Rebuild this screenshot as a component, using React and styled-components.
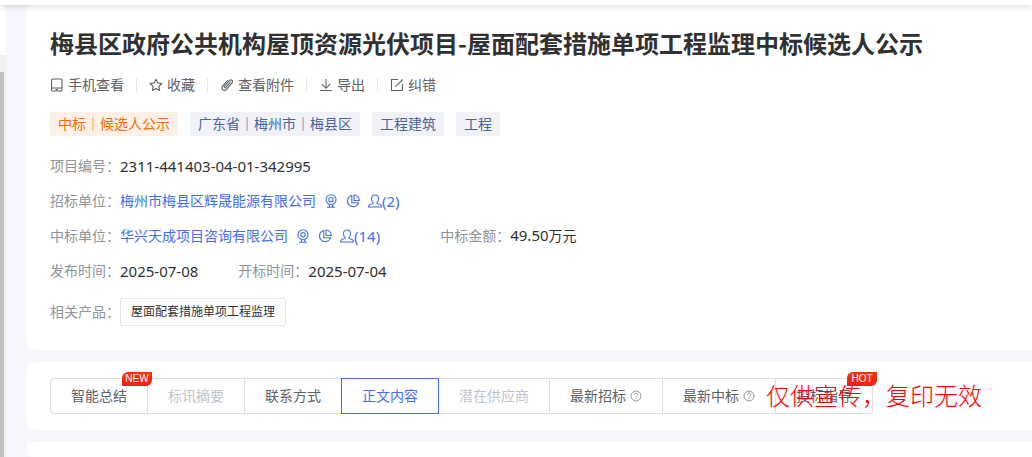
import React from "react";
import styled, { createGlobalStyle } from "styled-components";

const GlobalStyle = createGlobalStyle`
  * { box-sizing: border-box; }
  html, body { margin: 0; }
  body {
    background: #f5f7fc;
    color: #303133;
    font: 14px/20px "Noto Sans", "Noto Sans CJK SC", sans-serif;
    overflow: hidden;
  }
  button { font: inherit; color: inherit; background: none; border: 0; padding: 0; cursor: pointer; }
  a { color: inherit; text-decoration: none; }
`;

const Page = styled.div`
  display: flex;
  flex-direction: column;
  min-height: 100vh;
`;

const TopBar = styled.header`
  flex: none;
  height: 5px;
  background: #fff;
  box-shadow: 0 1px 6px rgba(0, 0, 0, 0.18);
  z-index: 1;
`;

const Body = styled.div`
  flex: 1;
  display: flex;
  gap: 20px;
`;

const SidePanel = styled.aside`
  flex: none;
  width: 6px;
  padding-top: 50px;
  background: #fff;
  border-top-right-radius: 6px;
  display: flex;
  flex-direction: column;
`;

const ScrollTrack = styled.div`
  flex: 1;
  padding: 17px 2px 0 0;
  background: #f1f1f1;
  display: flex;
`;

const ScrollThumb = styled.div`
  flex: 1;
  background: #c1c1c1;
`;

const Main = styled.main`
  flex: 1;
  min-width: 0;
  display: flex;
  flex-direction: column;
  gap: 12px;
`;

const Card = styled.section`
  background: #fff;
  border-radius: 8px 0 0 8px;
  padding: ${(p) => p.$pad || "24px"};
  flex: ${(p) => (p.$fill ? 1 : "none")};
`;

const Title = styled.h1`
  margin: 0;
  font: 700 24px/32px "Noto Sans CJK SC", sans-serif;
`;

const Toolbar = styled.div`
  display: flex;
  margin-top: 16px;
  color: #606266;
`;

const ToolButton = styled.button`
  display: flex;
  align-items: center;
  gap: 4px;
  height: 20px;
`;

const Divider = styled.span`
  width: 1px;
  height: 14px;
  margin: 3px 12px;
  background: #e4e6ee;
`;

const Tags = styled.div`
  display: flex;
  gap: 12px;
  margin: 17px 0 12px;
`;

const Tag = styled.span`
  padding: 0 8px;
  line-height: 24px;
  border-radius: 2px;
  color: ${(p) => (p.$hot ? "#ff6a00" : "#4b639b")};
  background: ${(p) => (p.$hot ? "#fff1e8" : "#f0f2f7")};
`;

const InfoRow = styled.div`
  display: flex;
  align-items: center;
  height: 35px;
  gap: ${(p) => p.$gap || 0}px;
`;

const Field = styled.div`
  display: flex;
  align-items: center;
`;

const Label = styled.span`
  color: #909399;
`;

const Num = styled.span`
  font-size: 15px;
`;

const Company = styled.div`
  display: flex;
  align-items: center;
  gap: 8px;
  color: #446eee;
`;

const IconLink = styled.a`
  display: flex;
  align-items: center;
`;

const Products = styled.div`
  display: flex;
  align-items: center;
  margin-top: 10px;
`;

const Product = styled.a`
  padding: 0 10px;
  border: 1px solid #e4e6ee;
  border-radius: 2px;
  font-size: 12px;
  line-height: 26px;
`;

const TabArea = styled.div`
  position: relative;
`;

const Tabs = styled.nav`
  display: flex;
`;

const Tab = styled.button`
  position: relative;
  display: flex;
  align-items: center;
  gap: 4px;
  height: 36px;
  padding: 0 20px;
  border: 1px solid ${(p) => (p.$active ? "#446eee" : "#dcdfe6")};
  color: ${(p) => (p.$active ? "#446eee" : p.disabled ? "#c0c4cc" : "#606266")};
  z-index: ${(p) => (p.$active ? 1 : 0)};
  & + & { margin-left: -1px; }
  &:first-child { border-radius: 4px 0 0 4px; z-index: 1; }
  &:last-child { border-radius: 0 4px 4px 0; }
`;

const Badge = styled.span`
  position: absolute;
  top: -7px;
  right: -5px;
  width: 30px;
  border-radius: 6px 0 6px 0;
  background: linear-gradient(#ff3000, #ed2020);
  color: #fff;
  font: 10px/14px "Liberation Sans", sans-serif;
  text-align: center;
`;

const Watermark = styled.div`
  position: absolute;
  left: 716px;
  top: -1px;
  z-index: 3;
  color: #f00;
  font: 300 24px/36px "Noto Sans CJK SC", sans-serif;
  white-space: nowrap;
  pointer-events: none;
`;

const Svg = styled.svg`
  flex: none;
  fill: none;
  stroke: currentColor;
  stroke-width: 1.1;
`;

const HelpMark = styled(Svg)`
  color: #909399;
`;

const Icon = ({ children }) => (
  <Svg width="14" height="14" viewBox="0 0 14 14" aria-hidden="true">
    {children}
  </Svg>
);

const PhoneIcon = () => (
  <Icon>
    <rect x="1.500" y="1" width="10.500" height="12" rx="1" />
    <path d="M1.500 10h10.500M5.500 11.600h2.500" />
  </Icon>
);
const StarIcon = () => (
  <Icon>
    <path strokeLinejoin="round" d="M7 1.200l1.800 3.700 4.100.6-3 2.900.7 4.100L7 10.600l-3.600 1.900.7-4.100-3-2.900 4.100-.6z" />
  </Icon>
);
const ClipIcon = () => (
  <Icon>
    <path strokeLinecap="round" d="M10.300 4.200L5.900 9.400c-.9 1-2.300-.1-1.400-1.200l4.700-5.600c1.600-1.900 4.400.3 2.800 2.300l-5.400 6.400c-2.300 2.700-6.200-.4-4-3.200l4.700-5.600" />
  </Icon>
);
const DownloadIcon = () => (
  <Icon>
    <path d="M7 1v9M2.800 6.200L7 10.300l4.200-4.100M1 12.500h12" />
  </Icon>
);
const EditIcon = () => (
  <Icon>
    <path d="M8 1.500H1.500v11h11V6M5.500 8.700l7.200-7.200" />
  </Icon>
);
const CameraIcon = () => (
  <Icon>
    <circle cx="7" cy="5.700" r="5" />
    <circle cx="7" cy="5.700" r="2.200" />
    <path d="M5.400 10.500v2.700M8.600 10.500v2.700M3 13.300h8" />
  </Icon>
);
const PieIcon = () => (
  <Icon>
    <path d="M5.800 1.500a5.700 5.700 0 1 0 6.800 7.200H5.800z" />
    <path d="M8 1a5.200 5.200 0 0 1 5.200 5.500H8z" />
  </Icon>
);
const UserIcon = () => (
  <Icon>
    <path d="M5 8.400C3.700 7.500 3.500 5.900 3.500 4.700 3.500 2.400 5 1 7 1s3.500 1.400 3.500 3.700c0 1.200-.2 2.800-1.500 3.700v1l3 1.100c1 .4 1.500 1.100 1.500 2.500H.5c0-1.400.5-2.100 1.500-2.500l3-1.100z" />
  </Icon>
);
const HelpIcon = () => (
  <HelpMark width="12" height="12" viewBox="0 0 14 14" aria-hidden="true">
    <circle cx="7" cy="7" r="5.800" />
    <path d="M5.200 5.700C5.200 3.200 8.900 3.300 8.900 5.500 8.900 6.800 7 6.900 7 8.500M7 9.600v1.200" />
  </HelpMark>
);

const tools = [
  [PhoneIcon, "手机查看"],
  [StarIcon, "收藏"],
  [ClipIcon, "查看附件"],
  [DownloadIcon, "导出"],
  [EditIcon, "纠错"],
];

const tabs = [
  { text: "智能总结", badge: "NEW" },
  { text: "标讯摘要", disabled: true },
  { text: "联系方式" },
  { text: "正文内容", active: true },
  { text: "潜在供应商", disabled: true },
  { text: "最新招标", help: true },
  { text: "最新中标", help: true },
  { text: "投标指导", badge: "HOT" },
];

const CompanyLinks = ({ name, contacts }) => (
  <Company>
    <a href="#company">{name}</a>
    <IconLink href="#monitor" aria-label="监控"><CameraIcon /></IconLink>
    <IconLink href="#analysis" aria-label="分析"><PieIcon /></IconLink>
    <IconLink href="#contacts"><UserIcon /><Num>({contacts})</Num></IconLink>
  </Company>
);

export default function App() {
  return (
    <Page>
      <GlobalStyle />
      <TopBar />
      <Body>
        <SidePanel>
          <ScrollTrack><ScrollThumb /></ScrollTrack>
        </SidePanel>
        <Main>
          <Card $pad="22px 24px 24px">
            <Title>梅县区政府公共机构屋顶资源光伏项目-屋面配套措施单项工程监理中标候选人公示</Title>
            <Toolbar>
              {tools.map(([Glyph, text], i) => (
                <React.Fragment key={text}>
                  {i > 0 && <Divider />}
                  <ToolButton type="button"><Glyph />{text}</ToolButton>
                </React.Fragment>
              ))}
            </Toolbar>
            <Tags>
              <Tag $hot>中标｜候选人公示</Tag>
              <Tag>广东省｜梅州市｜梅县区</Tag>
              <Tag>工程建筑</Tag>
              <Tag>工程</Tag>
            </Tags>
            <InfoRow>
              <Field><Label>项目编号：</Label><Num>2311-441403-04-01-342995</Num></Field>
            </InfoRow>
            <InfoRow>
              <Field>
                <Label>招标单位：</Label>
                <CompanyLinks name="梅州市梅县区辉晟能源有限公司" contacts={2} />
              </Field>
            </InfoRow>
            <InfoRow $gap={60}>
              <Field>
                <Label>中标单位：</Label>
                <CompanyLinks name="华兴天成项目咨询有限公司" contacts={14} />
              </Field>
              <Field><Label>中标金额：</Label><span><Num>49.50</Num>万元</span></Field>
            </InfoRow>
            <InfoRow $gap={40}>
              <Field><Label>发布时间：</Label><Num>2025-07-08</Num></Field>
              <Field><Label>开标时间：</Label><Num>2025-07-04</Num></Field>
            </InfoRow>
            <Products>
              <Label>相关产品：</Label>
              <Product href="#product">屋面配套措施单项工程监理</Product>
            </Products>
          </Card>
          <Card $pad="16px 24px">
            <TabArea>
              <Tabs>
                {tabs.map((t) => (
                  <Tab key={t.text} type="button" disabled={t.disabled} $active={t.active}>
                    {t.text}
                    {t.help && <HelpIcon />}
                    {t.badge && <Badge>{t.badge}</Badge>}
                  </Tab>
                ))}
              </Tabs>
              <Watermark>仅供宣传，复印无效</Watermark>
            </TabArea>
          </Card>
          <Card $fill $pad="0" />
        </Main>
      </Body>
    </Page>
  );
}
